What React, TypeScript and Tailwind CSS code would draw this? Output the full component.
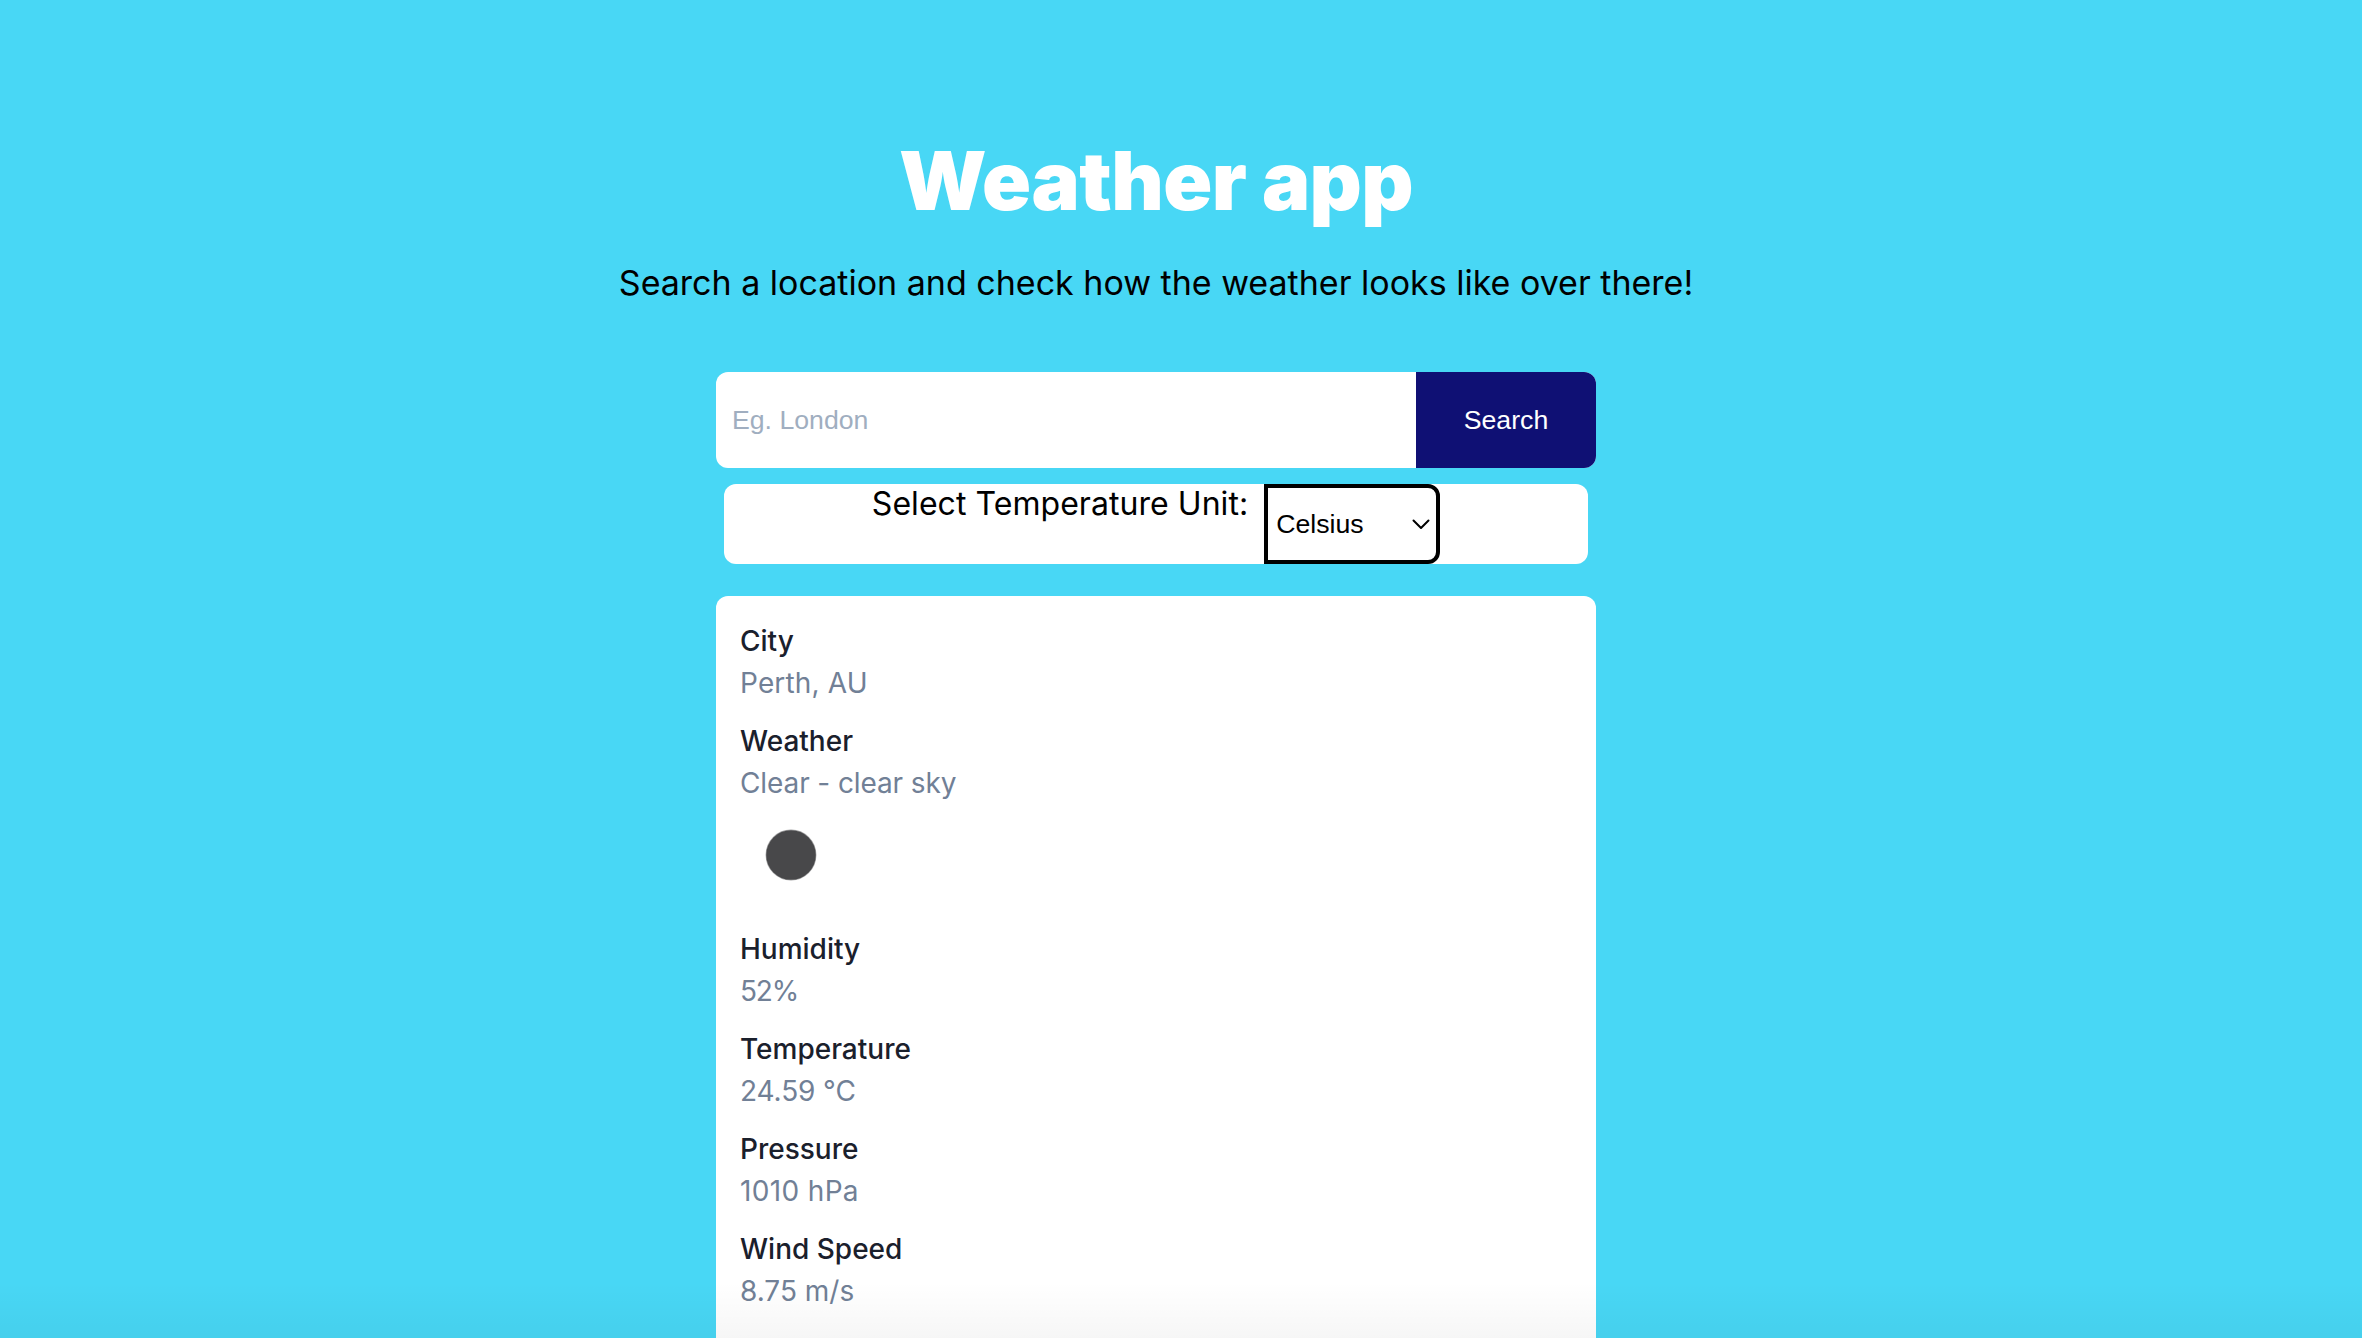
const rows = [
  { label: "City", value: "Perth, AU", tracking: "tracking-[0.15px]" },
  { label: "Weather", value: "Clear - clear sky", tracking: "tracking-[-0.1px]" },
  { label: "Humidity", value: "52%", tracking: "tracking-[-1.2px]" },
  { label: "Temperature", value: "24.59 °C", tracking: "tracking-[-0.1px]" },
  { label: "Pressure", value: "1010 hPa", tracking: "tracking-[0.35px]" },
  { label: "Wind Speed", value: "8.75 m/s", tracking: "tracking-normal" },
];

export default function App() {
  return (
    <div className="relative flex h-[1338px] w-full flex-col items-center overflow-hidden bg-[#48d7f5] pr-[50px] font-['Inter',sans-serif] text-black">
      <h1 className="mt-[131px] text-[81px] leading-[100px] font-black tracking-[-0.6px] text-white">Weather app</h1>
      <p className="mt-[29px] text-[34px] leading-[46px] whitespace-nowrap">Search a location and check how the weather looks like over there!</p>
      <div className="mt-[66px] flex h-[96px] w-[880px] shrink-0 overflow-hidden rounded-xl bg-white font-['Liberation_Sans',sans-serif] text-[26.67px]">
        <input placeholder="Eg. London" className="min-w-0 flex-1 px-4 pt-0.5 outline-none placeholder:text-[#a0aec0]" />
        <button className="w-[180px] bg-[#0f1074] text-white">Search</button>
      </div>
      <div className="mt-4 flex h-[80px] w-[864px] shrink-0 justify-center rounded-xl bg-white">
        <label className="mr-4 text-[32px] leading-[40px] tracking-[0.05px]">Select Temperature Unit:</label>
        <div className="flex h-[80px] w-[176px] items-center justify-between rounded-r-xl border-4 border-black pr-1.5 pl-2 font-['Liberation_Sans',sans-serif] text-[26.67px]">
          <span>Celsius</span>
          <svg width="18" height="11" viewBox="0 0 18 11" fill="none" stroke="black" strokeWidth="2" strokeLinecap="round" strokeLinejoin="round"><path d="M1.5 1.5 9 9l7.5-7.5" /></svg>
        </div>
      </div>
      <dl className="mt-8 h-[800px] w-[880px] shrink-0 rounded-xl bg-white px-6 pt-6 text-[28px] leading-[42px]">
        {rows.map(({ label, value, tracking }) => (
          <div key={label} className="mb-4">
            <dt className="font-medium text-[#1a202c]">{label}</dt>
            <dd className={`text-[#718096] ${tracking}`}>{value}</dd>
            {label === "Weather" && (
              <svg width="100" height="108" viewBox="0 0 100 108"><circle cx="51" cy="51" r="24.8" fill="#48484a" stroke="#48484a" strokeOpacity="0.5" strokeWidth="1.2" /></svg>
            )}
          </div>
        ))}
      </dl>
      <div className="pointer-events-none absolute inset-x-0 bottom-0 h-[56px] bg-linear-to-b from-transparent to-black/[0.035]" />
    </div>
  );
}
